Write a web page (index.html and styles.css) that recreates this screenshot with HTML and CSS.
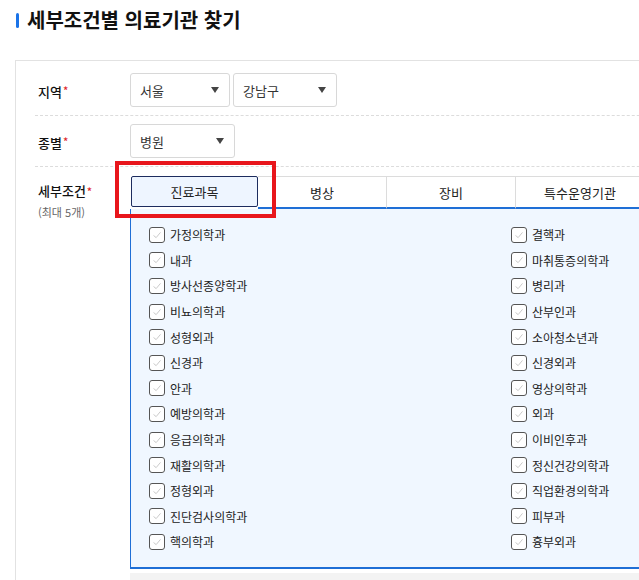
FILE: index.html
```html
<!DOCTYPE html>
<html lang="ko">
<head>
<meta charset="utf-8">
<link rel="stylesheet" href="styles.css">
</head>
<body>
<div class="page">
  <h2 class="title"><span class="title-bar"></span>세부조건별 의료기관 찾기</h2>
  <div class="panel">
    <div class="row row-first">
      <div class="label">지역<span class="req">*</span></div>
      <div class="field">
        <div class="select sel-city"><span>서울</span><i class="arrow"></i></div>
        <div class="select sel-gu"><span>강남구</span><i class="arrow"></i></div>
      </div>
    </div>
    <div class="row">
      <div class="label">종별<span class="req">*</span></div>
      <div class="field">
        <div class="select sel-type"><span>병원</span><i class="arrow"></i></div>
      </div>
    </div>
    <div class="row row-detail">
      <div class="label label-top">
        <div>세부조건<span class="req">*</span></div>
        <div class="sub">(최대 5개)</div>
      </div>
      <div class="field-col">
        <div class="tabs">
          <div class="tab active">진료과목</div>
          <div class="tab">병상</div>
          <div class="tab">장비</div>
          <div class="tab">특수운영기관</div>
        </div>
        <div class="tab-body">
          <ul class="checks">
            <li><span class="cb"><svg viewBox="0 0 16 16"><polyline points="4,8.5 7,11 12,5"/></svg></span>가정의학과</li>
            <li><span class="cb"><svg viewBox="0 0 16 16"><polyline points="4,8.5 7,11 12,5"/></svg></span>내과</li>
            <li><span class="cb"><svg viewBox="0 0 16 16"><polyline points="4,8.5 7,11 12,5"/></svg></span>방사선종양학과</li>
            <li><span class="cb"><svg viewBox="0 0 16 16"><polyline points="4,8.5 7,11 12,5"/></svg></span>비뇨의학과</li>
            <li><span class="cb"><svg viewBox="0 0 16 16"><polyline points="4,8.5 7,11 12,5"/></svg></span>성형외과</li>
            <li><span class="cb"><svg viewBox="0 0 16 16"><polyline points="4,8.5 7,11 12,5"/></svg></span>신경과</li>
            <li><span class="cb"><svg viewBox="0 0 16 16"><polyline points="4,8.5 7,11 12,5"/></svg></span>안과</li>
            <li><span class="cb"><svg viewBox="0 0 16 16"><polyline points="4,8.5 7,11 12,5"/></svg></span>예방의학과</li>
            <li><span class="cb"><svg viewBox="0 0 16 16"><polyline points="4,8.5 7,11 12,5"/></svg></span>응급의학과</li>
            <li><span class="cb"><svg viewBox="0 0 16 16"><polyline points="4,8.5 7,11 12,5"/></svg></span>재활의학과</li>
            <li><span class="cb"><svg viewBox="0 0 16 16"><polyline points="4,8.5 7,11 12,5"/></svg></span>정형외과</li>
            <li><span class="cb"><svg viewBox="0 0 16 16"><polyline points="4,8.5 7,11 12,5"/></svg></span>진단검사의학과</li>
            <li><span class="cb"><svg viewBox="0 0 16 16"><polyline points="4,8.5 7,11 12,5"/></svg></span>핵의학과</li>
            <li><span class="cb"><svg viewBox="0 0 16 16"><polyline points="4,8.5 7,11 12,5"/></svg></span>결핵과</li>
            <li><span class="cb"><svg viewBox="0 0 16 16"><polyline points="4,8.5 7,11 12,5"/></svg></span>마취통증의학과</li>
            <li><span class="cb"><svg viewBox="0 0 16 16"><polyline points="4,8.5 7,11 12,5"/></svg></span>병리과</li>
            <li><span class="cb"><svg viewBox="0 0 16 16"><polyline points="4,8.5 7,11 12,5"/></svg></span>산부인과</li>
            <li><span class="cb"><svg viewBox="0 0 16 16"><polyline points="4,8.5 7,11 12,5"/></svg></span>소아청소년과</li>
            <li><span class="cb"><svg viewBox="0 0 16 16"><polyline points="4,8.5 7,11 12,5"/></svg></span>신경외과</li>
            <li><span class="cb"><svg viewBox="0 0 16 16"><polyline points="4,8.5 7,11 12,5"/></svg></span>영상의학과</li>
            <li><span class="cb"><svg viewBox="0 0 16 16"><polyline points="4,8.5 7,11 12,5"/></svg></span>외과</li>
            <li><span class="cb"><svg viewBox="0 0 16 16"><polyline points="4,8.5 7,11 12,5"/></svg></span>이비인후과</li>
            <li><span class="cb"><svg viewBox="0 0 16 16"><polyline points="4,8.5 7,11 12,5"/></svg></span>정신건강의학과</li>
            <li><span class="cb"><svg viewBox="0 0 16 16"><polyline points="4,8.5 7,11 12,5"/></svg></span>직업환경의학과</li>
            <li><span class="cb"><svg viewBox="0 0 16 16"><polyline points="4,8.5 7,11 12,5"/></svg></span>피부과</li>
            <li><span class="cb"><svg viewBox="0 0 16 16"><polyline points="4,8.5 7,11 12,5"/></svg></span>흉부외과</li>
          </ul>
        </div>
        <div class="next-bar"></div>
      </div>
    </div>
  </div>
  <div class="highlight"></div>
</div>
</body>
</html>
```

FILE: styles.css
```css
* { box-sizing: border-box; }
html, body {
  margin: 0;
  padding: 0;
  background: #fff;
  overflow: hidden;
}
body {
  font-family: "Noto Sans CJK KR", "Noto Sans", sans-serif;
  color: #222;
  width: 639px;
  height: 580px;
}
.page {
  position: relative;
  width: 639px;
  height: 580px;
  overflow: hidden;
}
.title {
  margin: 0;
  padding: 7px 0 0 16px;
  height: 60px;
  display: flex;
  align-items: flex-start;
  font-size: 20px;
  font-weight: 700;
  line-height: 26px;
  color: #111;
  letter-spacing: 0;
}
.title-bar {
  display: inline-block;
  width: 3px;
  height: 15px;
  margin-top: 6px;
  margin-right: 8px;
  background: #1a73e8;
  border-radius: 2px;
}
.panel {
  margin-left: 15px;
  width: 700px;
  border: 1px solid #e2e2e2;
  border-right: none;
  border-bottom: none;
  height: 540px;
}
.row {
  margin-left: 19px;
  display: flex;
  align-items: center;
  padding: 8px 0 8px;
  border-bottom: 1px dashed #dcdcdc;
}
.row-first { padding-top: 12px; padding-bottom: 8px; }
.row-detail {
  align-items: flex-start;
  border-bottom: none;
  padding-top: 9px;
}
.label {
  width: 95px;
  flex: none;
  padding-left: 3px;
  font-size: 13px;
  font-weight: 500;
  color: #111;
  padding-top: 3px;
}
.label-top { padding-top: 5px; line-height: 20px; }
.req { color: #e0262c; font-size: 11px; vertical-align: top; margin-left: 1px; }
.sub { font-size: 11px; font-weight: 400; color: #666; margin-top: 1px; }
.field { display: flex; gap: 3px; }
.select {
  height: 34px;
  border: 1px solid #d8d8d8;
  border-radius: 3px;
  background: #fff;
  display: flex;
  align-items: center;
  justify-content: space-between;
  padding: 0 10px 0 9px;
  font-size: 13px;
  color: #333;
}
.sel-city { width: 100px; }
.sel-gu { width: 104px; }
.sel-type { width: 105px; }
.arrow {
  width: 0;
  height: 0;
  border-left: 4.5px solid transparent;
  border-right: 4.5px solid transparent;
  border-top: 6px solid #444;
}
.field-col { display: flex; flex-direction: column; width: 560px; }
.tabs {
  display: flex;
  height: 33px;
}
.tab {
  width: 129px;
  flex: none;
  display: flex;
  align-items: center;
  justify-content: center;
  font-size: 13px;
  color: #222;
  background: #fff;
  border-top: 1px solid #dcdcdc;
  border-right: 1px solid #dcdcdc;
  border-bottom: 2px solid #1f6fd6;
}
.tab.active {
  margin-left: 1px;
  width: 127px;
  background: #eef5ff;
  border: 1px solid #1d2c5e;
  border-radius: 2px;
  height: 31px;
}
.tab-body {
  background: #f0f7ff;
  border: 2px solid #1f6fd6;
  border-top: none;
  border-left: 1px solid #1f6fd6;
  padding: 13px 0 12px 18px;
}
.checks {
  list-style: none;
  margin: 0;
  padding: 0;
  display: grid;
  grid-auto-flow: column;
  grid-template-rows: repeat(13, 25.6px);
  grid-template-columns: 362px 1fr;
}
.checks li {
  display: flex;
  align-items: center;
  font-size: 12px;
  color: #222;
}
.cb {
  width: 16px;
  height: 16px;
  flex: none;
  border: 1px solid #555;
  border-radius: 3px;
  background: #fff;
  margin-right: 5px;
  display: flex;
}
.cb svg {
  width: 14px;
  height: 14px;
  fill: none;
  stroke: #c8c8c8;
  stroke-width: 1.1;
}
.next-bar {
  margin-top: 4px;
  height: 12px;
  background: #f3f3f3;
}
.highlight {
  position: absolute;
  left: 115px;
  top: 161px;
  width: 161px;
  height: 57px;
  border: 4px solid #e8161c;
}
```
